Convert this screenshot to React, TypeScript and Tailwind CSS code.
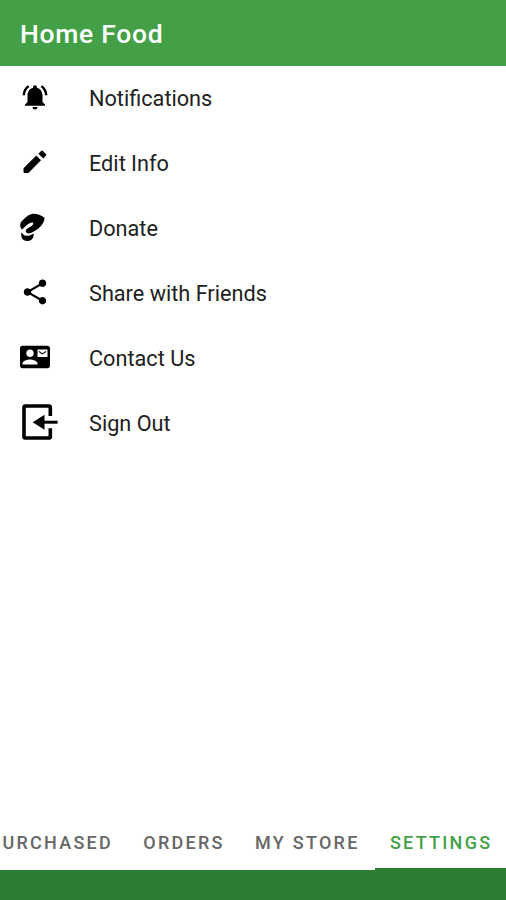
import { useState } from "react";
import type { ReactNode } from "react";
import { MdContactMail, MdNotificationsActive, MdShare } from "react-icons/md";

interface MenuItem {
  label: string;
  icon: ReactNode;
}

function PencilIcon() {
  return (
    <svg viewBox="0 0 30 30" className="size-[30px]" fill="currentColor">
      <path d="M3.500 21.300v3.700q0 1 1 1h3.900L21 13.300 16.300 8.600z" />
      <path d="M18.400 6.700l2.700-2.700q.9-.8 1.800 0l3 3q.8.9 0 1.800l-2.700 2.700z" />
    </svg>
  );
}

function DonateIcon() {
  return (
    <svg viewBox="0 0 30 30" className="size-[30px]" fill="currentColor">
      <path d="M.6 15.500C-.3 12.500.3 10.500 2.500 8.400 5.500 5.300 8.500 2.600 12 2c4-.6 8.500 1 12.600 3.700-.2 4-2.400 7.400-5.600 10.300-2.500 2.300-5.500 3.600-8.300 5-2 .9-4 .4-4.900-1.200-.4-1.500.6-2.700 2.200-3.700 1.900-1.200 4-2.200 5-3.700.7-1.400-.2-2.200-1.900-1.700-2.200.6-3.800 1.900-5.400 3.300-1.300 1.200-2.300 2.500-3.400 3.400-.8-.3-1.400-1-1.700-1.900z" />
      <path d="M1.500 20.300c1 2 2.500 3.300 4.800 3.500 2.500.2 4.500-.8 7.200-2.300.5 2.800-.4 5.200-2.400 6.600-2.200 1.400-5.500 1.200-7.600-.1-2.200-1.700-2.700-4.900-2-7.700z" />
    </svg>
  );
}

function SignOutIcon() {
  return (
    <svg viewBox="0 0 40 40" className="size-10" fill="none">
      <path
        d="M30.300 14V5a1 1 0 0 0-1-1H5a1 1 0 0 0-1 1v30a1 1 0 0 0 1 1h24.300a1 1 0 0 0 1-1v-8.800"
        stroke="currentColor"
        strokeWidth="3.600"
      />
      <path d="M12.700 20.200L24.500 12.700v15z" fill="currentColor" />
      <path d="M23 20.200h14.600" stroke="currentColor" strokeWidth="3" />
    </svg>
  );
}

const menuItems: MenuItem[] = [
  { label: "Notifications", icon: <MdNotificationsActive className="size-[30px]" /> },
  { label: "Edit Info", icon: <PencilIcon /> },
  { label: "Donate", icon: <DonateIcon /> },
  { label: "Share with Friends", icon: <MdShare className="size-[30px]" /> },
  { label: "Contact Us", icon: <MdContactMail className="size-[30px]" /> },
  { label: "Sign Out", icon: <SignOutIcon /> },
];

const tabs = ["PURCHASED", "ORDERS", "MY STORE", "SETTINGS"];

export default function App() {
  const [activeTab, setActiveTab] = useState("SETTINGS");

  return (
    <div className="flex h-screen w-full flex-col overflow-hidden bg-white font-[Roboto,sans-serif]">
      <header className="flex h-[66px] shrink-0 items-center bg-[#43a047] pt-0.5 pl-5">
        <h1 className="text-[26.5px] leading-8 font-medium tracking-[0.7px] text-white">Home Food</h1>
      </header>

      <ul className="flex-1">
        {menuItems.map((item) => (
          <li key={item.label} className="flex h-[65px] items-center pl-5">
            <span className="flex w-[69px] shrink-0 pb-[3px] text-black">{item.icon}</span>
            <span className="pt-0.5 text-[21.7px] text-[#212121]">{item.label}</span>
          </li>
        ))}
      </ul>

      <nav className="-mr-[1.5px] flex h-[54px] shrink-0 justify-end">
        {tabs.map((tab) => (
          <button
            key={tab}
            onClick={() => setActiveTab(tab)}
            className={`h-full shrink-0 border-b-2 px-[15.2px] text-[18px] font-medium tracking-[2.25px] ${
              tab === activeTab ? "border-[#2e7d32] text-[#43a047]" : "border-transparent text-[#666666]"
            }`}
          >
            {tab}
          </button>
        ))}
      </nav>
      <div className="h-[30px] shrink-0 bg-[#2e7d32]" />
    </div>
  );
}
